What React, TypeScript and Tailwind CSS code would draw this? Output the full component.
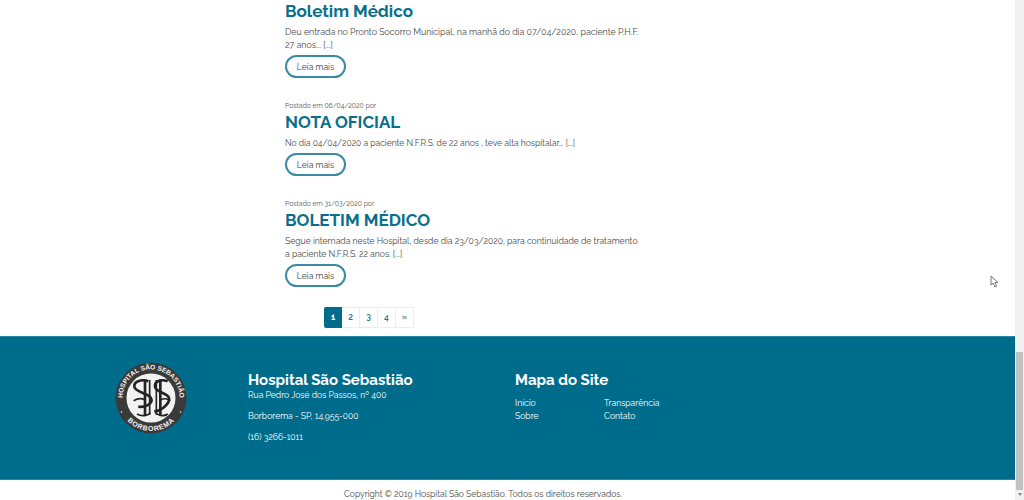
const posts = [
  { meta: "", title: "Boletim Médico", size: "text-[8.8px]", lines: ["Deu entrada no Pronto Socorro Municipal, na manhã do dia 07/04/2020, paciente P.H.F.", "27 anos... [...]"] },
  { meta: "Postado em 06/04/2020 por", title: "NOTA OFICIAL", size: "text-[8.5px]", lines: ["No dia 04/04/2020 a paciente N.F.R.S. de 22 anos , teve alta hospitalar... [...]"] },
  { meta: "Postado em 31/03/2020 por", title: "BOLETIM MÉDICO", size: "text-[8.6px]", lines: ["Segue internada neste Hospital, desde dia 23/03/2020, para continuidade de tratamento", "a paciente N.F.R.S. 22 anos. [...]"] },
];

const pages = ["2", "3", "4", "»"];

function Logo() {
  return (
    <svg width="72" height="72" viewBox="0 0 72 72" className="shrink-0">
      <defs>
        <path id="arcTop" d="M9 45A28.5 28.5 0 1 1 63 45" />
        <path id="arcBottom" d="M8 53A32.5 32.5 0 0 0 64 53" />
      </defs>
      <circle cx="36" cy="36" r="35.5" fill="#3a3a3a" />
      <circle cx="36" cy="36" r="24.5" fill="#f2f2f2" />
      <text fill="#f2f2f2" fontSize="6.6" fontWeight="700" fontFamily="Liberation Sans, sans-serif">
        <textPath href="#arcTop" startOffset="50%" textAnchor="middle">HOSPITAL SÃO SEBASTIÃO</textPath>
      </text>
      <text fill="#f2f2f2" fontSize="7" fontWeight="700" fontFamily="Liberation Sans, sans-serif" letterSpacing="0.7">
        <textPath href="#arcBottom" startOffset="50%" textAnchor="middle">BORBOREMA</textPath>
      </text>
      <circle cx="6.5" cy="50" r="0.8" fill="#f2f2f2" />
      <circle cx="65.5" cy="50" r="0.8" fill="#f2f2f2" />
      {/* monogram, drawn in a 156 unit box */}
      <g transform="translate(10 10) scale(0.3333)" fill="none" stroke="#222222" strokeWidth="8">
        <path d="M70 28C50 20 26 28 28 44C30 62 70 62 78 78C86 94 60 108 40 104" />
        <path d="M128 28C108 20 88 28 90 44C92 62 128 62 132 78C136 96 105 118 88 118" />
        <path d="M60 22V130M106 22V130" strokeWidth="8" />
        <path d="M74 24V128M94 24V128" strokeWidth="5" />
        <path d="M26 86C40 78 50 78 60 84M106 84C118 78 128 80 136 86" strokeWidth="5" />
        <path d="M36 126C48 134 70 132 76 122M92 122C100 132 118 134 128 126" strokeWidth="5" />
      </g>
    </svg>
  );
}

export default function App() {
  return (
    <div className="relative flex h-[500px] w-[1024px] overflow-hidden bg-white font-['Raleway','Lato','Liberation_Sans',sans-serif] text-[#555]">
      <div className="flex min-w-0 flex-1 flex-col">
        <main className="h-[336px] shrink-0 pl-[285px]">
          {posts.map((post, i) => (
            <article key={post.title} className={i === 2 ? "pb-[20px]" : "pb-[21px]"}>
              {post.meta && <p className="h-[12px] pt-[1px] text-[6.8px] leading-[12px] text-[#555]">{post.meta}</p>}
              <h2 className="h-[22px] text-[17px] font-bold leading-[22px] text-[#0a6f8c]">{post.title}</h2>
              <div className={`mt-[3px] ${post.size} pt-[0.5px] leading-[13px] text-[#4a4a4a]`}>
                {post.lines.map((line) => (
                  <p key={line} className="whitespace-nowrap">{line}</p>
                ))}
              </div>
              <a className="mt-[3.5px] flex h-[23px] w-[61px] items-center justify-center rounded-full border-2 border-[#3a8aa3] pt-[1px] text-[8.6px] text-[#444]">
                Leia mais
              </a>
            </article>
          ))}
          <nav className="ml-[39px] flex h-[21px] w-fit text-[8.5px] font-bold">
            <span className="flex w-[18px] items-center justify-center rounded-l-[2px] bg-[#006c8b] text-white">1</span>
            {pages.map((page) => (
              <span key={page} className="flex w-[18px] items-center justify-center border border-l-0 border-[#eeeeee] font-semibold text-[#1f7c97]">
                {page}
              </span>
            ))}
          </nav>
        </main>

        <footer className="flex h-[144px] shrink-0 border-y border-y-[#2a86a0] bg-[#006c8b] pl-[115px] pt-[25px] text-white">
          <Logo />
          <div className="ml-[61px] w-[267px]">
            <h3 className="mt-[8px] text-[15px] font-bold leading-[20px]">Hospital São Sebastião</h3>
            <p className="mt-[-1px] text-[8.6px] leading-[12px]">Rua Pedro José dos Passos, nº 400</p>
            <p className="mt-[9px] text-[8.6px] leading-[12px]">Borborema - SP, 14.955-000</p>
            <p className="mt-[9px] text-[8.6px] leading-[12px]">(16) 3266-1011</p>
          </div>
          <div>
            <h3 className="mt-[8px] text-[15px] font-bold leading-[20px]">Mapa do Site</h3>
            <div className="mt-[7px] grid grid-cols-[89px_89px] text-[8.6px] leading-[13px]">
              <span>Início</span>
              <span>Transparência</span>
              <span>Sobre</span>
              <span>Contato</span>
            </div>
          </div>
        </footer>

        <p className="pl-[344px] pt-[8px] text-[8.55px] leading-[12px] text-[#4a4a4a]">
          Copyright © 2019 Hospital São Sebastião. Todos os direitos reservados.
        </p>
      </div>

      {/* scrollbar */}
      <div className="flex w-[9px] shrink-0 flex-col items-center bg-[#f0f0f0]">
        <div className="mt-[352px] h-[138px] w-[7px] bg-[#c1c1c1]" />
        <span className="mt-[3px] h-0 w-0 border-x-[2px] border-t-[3px] border-x-transparent border-t-[#8a8a8a]" />
      </div>

      {/* mouse pointer */}
      <svg className="absolute left-[990px] top-[275px]" width="9" height="13" viewBox="0 0 9 13">
        <path d="M1 1v9l2.2-1.8L5 12l1.6-.8L5 7.6h3z" fill="#fff" stroke="#666" strokeWidth="0.9" />
      </svg>
    </div>
  );
}
